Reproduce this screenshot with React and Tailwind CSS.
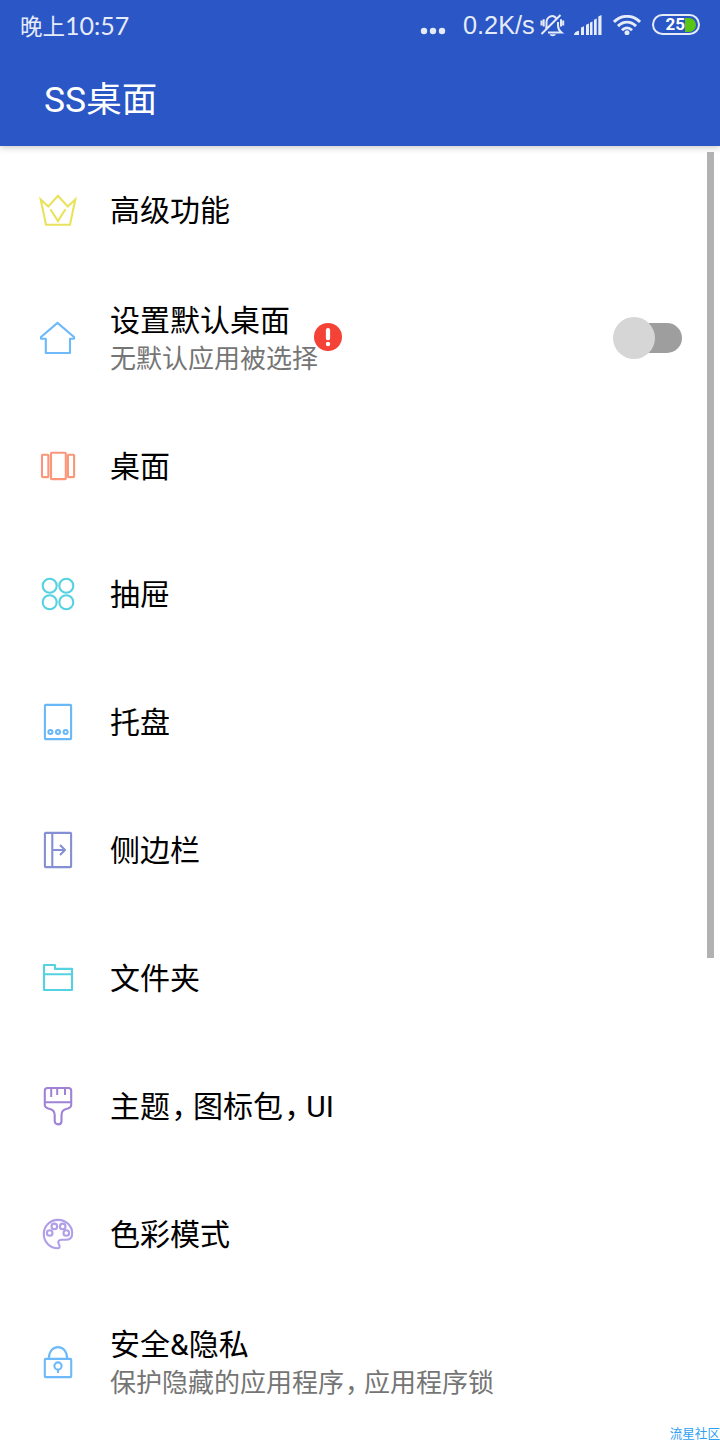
const CJK = "font-['Roboto','Noto_Sans_CJK_SC',sans-serif]";

function LineIcon({ color, children }) {
  return (
    <svg
      viewBox="0 0 40 40"
      className={`h-10 w-10 shrink-0 ${color}`}
      fill="none"
      stroke="currentColor"
      strokeWidth="2.1"
      strokeLinejoin="round"
    >
      {children}
    </svg>
  );
}

function CrownIcon() {
  return (
    <LineIcon color="text-[#eae25c]">
      <path
        d="M2.7 9.5 10.3 16.5 20 5.8l9.7 10.7 7.6-7L32 34.8H8z"
        strokeLinejoin="miter"
      />
      <path d="M12.4 19.2 20 31l7.4-11.8" strokeLinejoin="miter" />
    </LineIcon>
  );
}

function HomeIcon() {
  return (
    <LineIcon color="text-[#6db9fa]">
      <path d="M19.5 4.9 36 19v1.7h-4V35H7.8V20.7H3V19z" />
    </LineIcon>
  );
}

function DesktopIcon() {
  return (
    <LineIcon color="text-[#fb9678]">
      <rect x="4" y="8.8" width="6.4" height="22.3" rx="0.8" />
      <rect x="13" y="6.8" width="14.8" height="26.3" rx="0.8" />
      <rect x="29.9" y="8.8" width="6.2" height="22.3" rx="0.8" />
    </LineIcon>
  );
}

function DrawerIcon() {
  return (
    <LineIcon color="text-[#55d2e2]">
      <circle cx="11.7" cy="11.8" r="7" />
      <circle cx="28.3" cy="11.8" r="7" />
      <circle cx="11.7" cy="28.3" r="7" />
      <circle cx="28.3" cy="28.3" r="7" />
    </LineIcon>
  );
}

function DockIcon() {
  return (
    <LineIcon color="text-[#69b8f8]">
      <rect x="6.9" y="2.9" width="26.2" height="34.2" rx="0.8" />
      <circle cx="12.4" cy="30" r="2" />
      <circle cx="20" cy="30" r="2" />
      <circle cx="27.6" cy="30" r="2" />
    </LineIcon>
  );
}

function SidebarIcon() {
  return (
    <LineIcon color="text-[#8490d3]">
      <rect x="6.9" y="2.9" width="26.2" height="34.2" rx="0.8" />
      <path d="M14.3 3v34M14.3 20h12.4M22 15l5 5-5 5" />
    </LineIcon>
  );
}

function FolderIcon() {
  return (
    <LineIcon color="text-[#55d2e2]">
      <path d="M6 7h11v3.9h17V32H6zM6 16.3h28" />
    </LineIcon>
  );
}

function BrushIcon() {
  return (
    <LineIcon color="text-[#9f82d5]">
      <path d="M9.5 2h21a2.7 2.7 0 0 1 2.7 2.7V19c0 2.6-2.8 3.5-5.1 4-3.2.8-4.6 2.8-4.6 6v6.2c0 4.2-6.8 4.2-6.8 0V29c0-3.2-1.5-5.2-4.7-6-2.3-.5-5.2-1.4-5.2-4V4.7A2.7 2.7 0 0 1 9.5 2z" />
      <path d="M6.8 16.3h26.4M13.2 2v9M19.2 2v7M27 2v7" strokeWidth="2" />
    </LineIcon>
  );
}

function PaletteIcon() {
  return (
    <LineIcon color="text-[#b09ee8]">
      <path d="M20 34.2C11.5 34.2 5.8 27.7 5.8 20S12 5.9 20 5.9 34.2 12 34.2 19.2c0 4.3-2.7 6.6-6.7 6.6h-3.7c-3.4 0-4.300 2.200-3 4.200 1.200 1.800 1.200 4.200-.8 4.200z" />
      <circle cx="11.7" cy="19" r="2.8" />
      <circle cx="16.3" cy="12.4" r="2.8" />
      <circle cx="24.7" cy="12.4" r="2.8" />
      <circle cx="28.3" cy="19" r="2.8" />
    </LineIcon>
  );
}

function LockIcon() {
  return (
    <LineIcon color="text-[#6db9fa]">
      <rect x="6.8" y="16.9" width="26.4" height="18.2" rx="0.8" />
      <path d="M10.8 16.9c0-7 3.7-11.8 9.2-11.8s9.2 4.8 9.2 11.8M20 27.5v3.6" />
      <circle cx="20" cy="24" r="3.6" />
    </LineIcon>
  );
}

// full-width commas are pulled in so that they take about 3/4 of an em
function Label({ text }) {
  return text.split("，").map((part, i) => (
    <span key={part}>
      {i > 0 && <span className="ml-[0.04em] tracking-[-0.27em]">，</span>}
      {part}
    </span>
  ));
}

function Switch() {
  return (
    <div
      role="switch"
      aria-checked="false"
      className="mr-[38px] ml-auto flex h-[42px] w-[69px] items-center"
    >
      <div className="z-10 h-[42px] w-[42px] shrink-0 rounded-full bg-[#d6d6d6]" />
      <div className="-ml-[21px] h-[30px] w-12 shrink-0 rounded-r-full bg-[#9e9e9e]" />
    </div>
  );
}

function WarningBadge() {
  return (
    <svg viewBox="0 0 28 28" className="absolute top-[49px] left-[204px] h-7 w-7">
      <circle cx="14" cy="14" r="14" fill="#f44336" />
      <path
        d="M14 7.2v8"
        stroke="#fff"
        strokeWidth="4.2"
        strokeLinecap="round"
      />
      <circle cx="14" cy="21" r="2.2" fill="#fff" />
    </svg>
  );
}

const ITEMS = [
  { title: "高级功能", Icon: CrownIcon },
  {
    title: "设置默认桌面",
    sub: "无默认应用被选择",
    Icon: HomeIcon,
    warning: true,
    toggle: true,
  },
  { title: "桌面", Icon: DesktopIcon },
  { title: "抽屉", Icon: DrawerIcon },
  { title: "托盘", Icon: DockIcon },
  { title: "侧边栏", Icon: SidebarIcon },
  { title: "文件夹", Icon: FolderIcon },
  { title: "主题，图标包，UI", Icon: BrushIcon },
  { title: "色彩模式", Icon: PaletteIcon },
  { title: "安全&隐私", sub: "保护隐藏的应用程序，应用程序锁", Icon: LockIcon },
];

function SettingRow({ title, sub, Icon, warning, toggle }) {
  return (
    <li className="flex h-32 items-center gap-8 pl-[38px]">
      <Icon />
      <div className="relative flex h-32 flex-col justify-center pt-0.5 whitespace-nowrap">
        <p className="text-[30px] leading-10 text-black">
          <Label text={title} />
        </p>
        {sub && (
          <p className="text-[26px] leading-9 text-[#757575]">
            <Label text={sub} />
          </p>
        )}
        {warning && <WarningBadge />}
      </div>
      {toggle && <Switch />}
    </li>
  );
}

function StatusBar() {
  return (
    <div className="flex h-[52px] items-center pr-5 pl-5 text-[#e6ebf8]">
      <span className="text-[22.5px] whitespace-nowrap">
        晚上<span className="font-['Lato',sans-serif] text-[25px]">10:57</span>
      </span>
      <svg
        viewBox="0 0 26 8"
        className="mt-[10px] ml-auto h-2 w-[26px]"
        fill="currentColor"
      >
        <circle cx="4" cy="4" r="3.2" />
        <circle cx="13" cy="4" r="3.2" />
        <circle cx="22" cy="4" r="3.2" />
      </svg>
      <span className="ml-[17px] w-[73px] font-['Liberation_Sans',sans-serif] text-[25.3px] whitespace-nowrap">
        0.2K/s
      </span>
      <svg
        viewBox="0 0 26 24"
        className="mb-[3px] ml-[3px] h-6 w-[26px]"
        fill="none"
        stroke="currentColor"
        strokeWidth="2"
      >
        <path d="M9 19.5h13.5c-2.5-2-3.5-4-3.5-7V9M17 5C13.5.8 7.5 4 7.5 9.5V13c0 1-.2 2-.6 2.8M2.500 21 21.500 2" />
        <path d="M2.5 7.5v5M4.700 6.200v7.400M22 6.200v7.400M24.200 7.500v5" />
        <path d="M10.5 21.3h6.500c-.8 2.500-5.700 2.500-6.500 0z" fill="currentColor" stroke="none" />
      </svg>
      <svg viewBox="0 0 28 20" className="mb-[3px] ml-[9px] h-5 w-7" fill="currentColor">
        <path d="M0 20c0-2 2-3.800 5-4.200V20zM7 12.500l3-1.300V20H7zM12 9.800l3-1.300V20h-3zM16 7.500l2.500-1V20H16zM20 4.700l2.700-1.200V20H20zM24.300 1.500 27.500 0v20h-3.200z" />
      </svg>
      <svg
        viewBox="0 0 28 20"
        className="mb-[2px] ml-[11px] h-5 w-7"
        fill="none"
        stroke="currentColor"
        strokeWidth="2.9"
      >
        <path d="M1 6.9C8.5-.5 19.5-.5 27 6.900M5 11.100c5.300-5.300 12.700-5.300 18 0M9 15.200c3-3 7-3 10 0" />
        <circle cx="14" cy="17.7" r="2.5" fill="currentColor" stroke="none" />
      </svg>
      <div className="mb-[3px] ml-[11px] flex h-[21px] w-12 shrink-0 items-center rounded-full border-2 border-current">
        <span className="w-[31px] text-right text-[17px] leading-none font-bold text-white">
          25
        </span>
        <div className="h-[14px] w-[11px] rounded-r-full bg-[#5ac514]" />
      </div>
    </div>
  );
}

export default function App() {
  return (
    <div className={`relative h-[1440px] w-[720px] overflow-hidden bg-white ${CJK}`}>
      <header className="relative h-[146px] bg-[#2a56c6] shadow-[0_1px_7px_rgba(0,0,0,0.25)]">
        <StatusBar />
        <h1 className="pt-px pl-11 text-[35.5px] leading-[94px] text-white">
          SS桌面
        </h1>
      </header>

      <ul>
        {ITEMS.map((item) => (
          <SettingRow key={item.title} {...item} />
        ))}
      </ul>

      <div className="absolute top-[152px] left-[707px] h-[806px] w-[7px] bg-[#b2b2b2]" />
      <span className="absolute right-0 bottom-0 text-[12.6px] leading-[12px] whitespace-nowrap text-[#2fa0f4]">
        流星社区
      </span>
    </div>
  );
}
